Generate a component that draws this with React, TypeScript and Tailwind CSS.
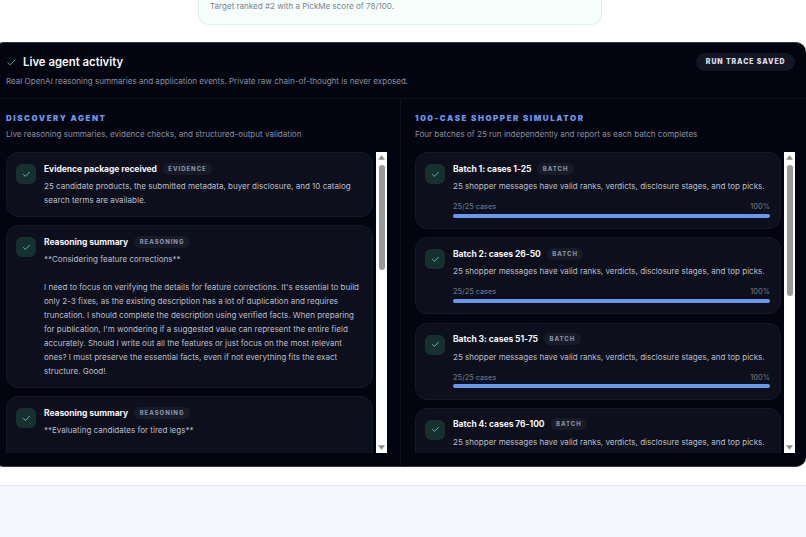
const F = "[font-family:Inter,'Liberation_Sans',sans-serif]";

function Check({ className }: { className: string }) {
  return (
    <svg viewBox="0 0 24 24" fill="none" stroke="currentColor" strokeWidth="2" strokeLinecap="round" strokeLinejoin="round" className={className}>
      <path d="M20 6 9 17l-5-5" />
    </svg>
  );
}

function Card({ title, tag, className, children }: { title: string; tag: string; className: string; children: React.ReactNode }) {
  return (
    <div className={`flex shrink-0 gap-[8px] rounded-[12px] border border-[#151926] bg-[#0d101c] pr-[10px] pl-[9px] ${className}`}>
      <div className="mt-[11px] flex h-5 w-5 shrink-0 items-center justify-center rounded-[6px] bg-[#15302f]">
        <Check className="h-[9px] w-[9px] text-[#6ee7b7]" />
      </div>
      <div className="min-w-0 flex-1 pt-[9.5px]">
        <div className="flex h-[12px] items-center gap-[6px]">
          <span className="text-[8.5px] leading-[12px] font-bold tracking-[-0.05px] text-[#f4f6fb]">{title}</span>
          <span className="rounded-full bg-[#171b28] px-[5.5px] py-[2px] text-[6px] leading-[8px] font-extrabold tracking-[0.95px] text-[#868da3]">{tag}</span>
        </div>
        {children}
      </div>
    </div>
  );
}

const P = "text-[8.04px] leading-[14px] text-[#b8bdcb]";

function Batch({ title, last }: { title: string; last?: boolean }) {
  return (
    <Card title={title} tag="BATCH" className="h-[77px]">
      <p className={`mt-[4.5px] whitespace-nowrap ${P}`}>25 shopper messages have valid ranks, verdicts, disclosure stages, and top picks.</p>
      {!last && (
        <>
          <div className="mt-[9px] flex justify-between text-[7.3px] leading-[10px] font-medium text-[#666d80]">
            <span>25/25 cases</span>
            <span>100%</span>
          </div>
          <div className="mt-[1.5px] h-[4px] rounded-full bg-[#6b96ee]" />
        </>
      )}
    </Card>
  );
}

function Scrollbar({ thumb }: { thumb: string }) {
  return (
    <div className="ml-[3px] flex h-[301px] w-[11px] shrink-0 flex-col items-center bg-white">
      <svg viewBox="0 0 8 5" className="mt-[3px] h-[5px] w-[7px] fill-[#8c8c8c]">
        <path d="M4 0 8 5H0Z" />
      </svg>
      <div className={`mt-[5px] w-[6px] rounded-full bg-[#9a9a9a] ${thumb}`} />
      <div className="flex-1" />
      <svg viewBox="0 0 8 5" className="mb-[3px] h-[5px] w-[7px] fill-[#8c8c8c]">
        <path d="M0 0H8L4 5Z" />
      </svg>
    </div>
  );
}

export default function App() {
  return (
    <div className={`${F} flex h-[537px] w-[806px] flex-col overflow-hidden bg-white`}>
      <div className="h-[25px] shrink-0">
        <div className="-mt-px ml-[198px] h-[26px] w-[404px] rounded-b-[10px] border border-t-0 border-[#dcf5e8] bg-[#f5fefa] pl-[11px] text-[8.06px] leading-[14px] text-[#7b8494]">
          Target ranked #2 with a PickMe score of 78/100.
        </div>
      </div>

      <section className="mt-[17px] -ml-[6px] flex h-[425px] w-[812px] shrink-0 flex-col overflow-hidden rounded-[10px] border-y border-[#33363f] bg-[#02040f]">
        <header className="flex h-[56px] shrink-0 justify-between border-b border-[#0e111c] pr-[11px] pl-[12px]">
          <div>
            <div className="mt-[11px] flex items-center gap-[6px]">
              <Check className="h-[11px] w-[11px] text-[#5ec79a]" />
              <h2 className="text-[11.35px] leading-[16px] font-semibold text-[#f7f8fb]">Live agent activity</h2>
            </div>
            <p className="mt-[4.5px] text-[8.06px] leading-[13px] text-[#8a90a0]">
              Real OpenAI reasoning summaries and application events. Private raw chain-of-thought is never exposed.
            </p>
          </div>
          <div className="mt-[10px] flex h-[18px] items-center rounded-full bg-[#141723] px-[9.5px] text-[6.9px] font-black tracking-[0.95px] text-[#d4d7e0]">
            RUN TRACE SAVED
          </div>
        </header>

        <div className="flex min-h-0 flex-1">
          <div className="flex w-[407px] shrink-0 flex-col border-r border-[#0e111c] pl-[12px]">
            <h3 className="mt-[14px] text-[7.95px] leading-[11px] font-black tracking-[1.55px] text-[#6b96ee]">DISCOVERY AGENT</h3>
            <p className="mt-[4px] text-[8.06px] leading-[13px] text-[#8a90a0]">Live reasoning summaries, evidence checks, and structured-output validation</p>
            <div className="mt-[11px] flex">
              <div className="flex h-[301px] w-[367px] flex-col gap-[8px] overflow-hidden">
                <Card title="Evidence package received" tag="EVIDENCE" className="h-[65px]">
                  <p className={`mt-[4.5px] ${P}`}>25 candidate products, the submitted metadata, buyer disclosure, and 10 catalog search terms are available.</p>
                </Card>
                <Card title="Reasoning summary" tag="REASONING" className="h-[163px]">
                  <p className={`mt-[4.5px] whitespace-pre-line ${P}`}>{"**Considering feature corrections**\n\nI need to focus on verifying the details for feature corrections. It's essential to build only 2-3 fixes, as the existing description has a lot of duplication and requires truncation. I should complete the description using verified facts. When preparing for publication, I'm wondering if a suggested value can represent the entire field accurately. Should I write out all the features or just focus on the most relevant ones? I must preserve the essential facts, even if not everything fits the exact structure. Good!"}</p>
                </Card>
                <Card title="Reasoning summary" tag="REASONING" className="h-[80px]">
                  <p className={`mt-[4.5px] ${P}`}>**Evaluating candidates for tired legs**</p>
                </Card>
              </div>
              <Scrollbar thumb="h-[105px]" />
            </div>
          </div>

          <div className="flex min-w-0 flex-1 flex-col pl-[14px]">
            <h3 className="mt-[14px] text-[7.95px] leading-[11px] font-black tracking-[1.55px] text-[#6b96ee]">100-CASE SHOPPER SIMULATOR</h3>
            <p className="mt-[4px] text-[8.06px] leading-[13px] text-[#8a90a0]">Four batches of 25 run independently and report as each batch completes</p>
            <div className="mt-[11px] flex">
              <div className="flex h-[301px] w-[366px] flex-col gap-[8.3px] overflow-hidden">
                <Batch title="Batch 1: cases 1-25" />
                <Batch title="Batch 2: cases 26-50" />
                <Batch title="Batch 3: cases 51-75" />
                <Batch title="Batch 4: cases 76-100" last />
              </div>
              <Scrollbar thumb="h-[131px]" />
            </div>
          </div>
        </div>
      </section>

      <div className="mt-[18px] flex-1 border-t border-[#dfe5ea] bg-[#f4f6fb]" />
    </div>
  );
}
